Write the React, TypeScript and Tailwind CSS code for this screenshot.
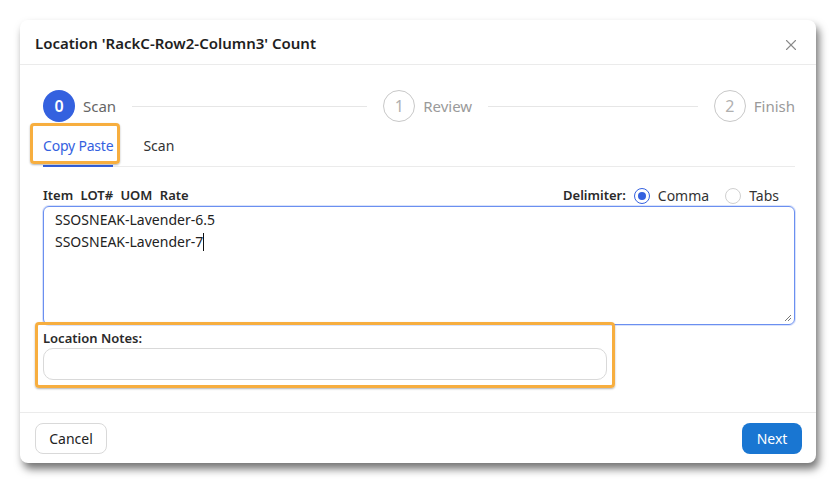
import React from 'react';
import { X } from 'lucide-react';

const font = { fontFamily: '"Noto Sans", "Open Sans", Arial, sans-serif' };

const StepCircle: React.FC<{ n: number; active?: boolean }> = ({ n, active }) => (
  <div
    className={`w-[32px] h-[32px] shrink-0 rounded-full flex items-center justify-center text-[16px] ${
      active ? 'bg-[#3461df] text-white font-semibold' : 'border border-[#c8c8c8] text-[#b0b0b0]'
    }`}
  >
    {n}
  </div>
);

const Radio: React.FC<{ checked?: boolean; label: string }> = ({ checked, label }) => (
  <label className="flex items-center gap-[8px]">
    <span
      className={`w-[16px] h-[16px] rounded-full flex items-center justify-center ${
        checked ? 'border border-[#3461df]' : 'border border-[#d0d0d0]'
      }`}
    >
      {checked && <span className="w-[8px] h-[8px] rounded-full bg-[#3461df]" />}
    </span>
    <span className="text-[14px] text-[#333]">{label}</span>
  </label>
);

export default function App() {
  return (
    <div className="w-[836px] h-[483px] bg-white pt-[20px] pl-[20px]" style={font}>
      <div className="w-[796px] h-[443px] bg-white rounded-[8px] shadow-[3px_6px_8px_rgba(0,0,0,0.55)] flex flex-col overflow-visible">
        {/* Header */}
        <div className="h-[45px] flex items-center justify-between pl-[15px] pr-[16px] border-b border-[#ebebeb]">
          <h2 className="text-[15px] font-semibold text-[#1f1f1f] pt-[2px]">Location 'RackC-Row2-Column3' Count</h2>
          <X className="w-[18px] h-[18px] text-[#8a8a8a] mt-[5px]" strokeWidth={1.5} />
        </div>

        {/* Body */}
        <div className="flex-1 pl-[23px] pr-[21px] pt-[25px]">
          {/* Stepper */}
          <div className="flex items-center h-[32px]">
            <StepCircle n={0} active />
            <span className="ml-[8px] text-[15px] text-[#666]">Scan</span>
            <div className="flex-[230] h-px bg-[#e6e6e6] mx-[16px]" />
            <StepCircle n={1} />
            <span className="ml-[8px] text-[15px] text-[#9a9a9a]">Review</span>
            <div className="flex-[205] h-px bg-[#e6e6e6] mx-[16px]" />
            <StepCircle n={2} />
            <span className="ml-[8px] text-[15px] text-[#9a9a9a]">Finish</span>
          </div>

          {/* Tabs */}
          <div className="flex items-end h-[45px] border-b border-[#ebebeb] gap-[30px]">
            <div className="relative pb-[8px] border-b-2 border-[#3461df] -mb-px">
              <span className="text-[14px] text-[#3461df] tracking-[-0.2px]">Copy Paste</span>
              <div className="absolute left-[-13px] right-[-7px] top-[-10px] bottom-[1px] border-[3px] border-[#f7ae3f] rounded-[4px] shadow-[0_1px_2px_rgba(0,0,0,0.3)]" />
            </div>
            <div className="pb-[9px]">
              <span className="text-[14px] text-[#333]">Scan</span>
            </div>
          </div>

          {/* Labels row */}
          <div className="flex items-center justify-between mt-[19px] h-[19px] pr-[16px]">
            <span className="text-[13px] font-semibold text-[#2a2a2a] [word-spacing:4px]">Item LOT# UOM Rate</span>
            <div className="flex items-center gap-[16px]">
              <span className="text-[13px] font-semibold text-[#2a2a2a] -mr-[8px]">Delimiter:</span>
              <Radio checked label="Comma" />
              <Radio label="Tabs" />
            </div>
          </div>

          {/* Textarea */}
          <div className="mt-[1px] h-[119px] border border-[#6b8ff0] rounded-[6px] shadow-[0_0_0_1px_rgba(100,140,240,0.25)] px-[11px] pt-[2px] text-[14px] leading-[22px] text-[#222] relative">
            <div>SSOSNEAK-Lavender-6.5</div>
            <div className="flex items-center">
              SSOSNEAK-Lavender-7<span className="inline-block w-px h-[18px] bg-[#111]" />
            </div>
            <svg className="absolute right-[2px] bottom-[2px]" width="8" height="8" viewBox="0 0 8 8">
              <path d="M7 1 L1 7 M7 4 L4 7" stroke="#777" strokeWidth="1" />
            </svg>
          </div>

          {/* Location notes */}
          <div className="relative w-[564px] mt-[11px]">
            <div className="text-[13px] font-semibold text-[#2a2a2a] h-[16px] leading-[16px] -mt-[6px]">Location Notes:</div>
            <div className="mt-[2px] h-[32px] border border-[#d9d9d9] rounded-[10px]" />
            <div className="absolute left-[-8px] right-[-8px] top-[-8px] bottom-[-8px] border-[3px] border-[#f7ae3f] rounded-[4px] shadow-[0_1px_2px_rgba(0,0,0,0.3)]" />
          </div>
        </div>

        {/* Footer */}
        <div className="h-[51px] border-t border-[#ebebeb] flex items-center justify-between pl-[15px] pr-[14px]">
          <button className="h-[31px] w-[72px] border border-[#d9d9d9] rounded-[8px] text-[14px] text-[#222] bg-white">
            Cancel
          </button>
          <button className="h-[31px] w-[60px] rounded-[8px] text-[14px] text-white bg-[#1976d2]">Next</button>
        </div>
      </div>
    </div>
  );
}
